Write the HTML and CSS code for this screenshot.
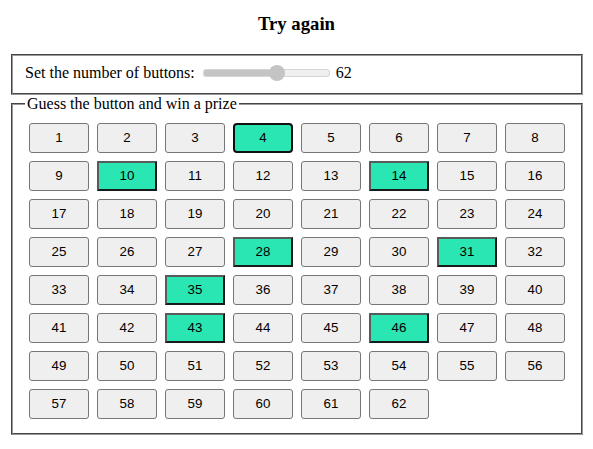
FILE: index.html
```html
<!DOCTYPE html>
<html>
<head>
<meta charset="utf-8">
<link rel="stylesheet" href="styles.css">
</head>
<body>
<h3 class="title">Try again</h3>
<fieldset class="settings">
  <label class="setting-label">Set the number of buttons: <input class="slider" type="range" min="5" max="100" value="62" style="--fill: 58.5%"> 62</label>
</fieldset>
<fieldset class="game">
  <legend class="game-legend">Guess the button and win a prize</legend>
  <div class="grid">
    <button class="num">1</button><button class="num">2</button><button class="num">3</button><button class="num focused">4</button><button class="num">5</button><button class="num">6</button><button class="num">7</button><button class="num">8</button>
    <button class="num">9</button><button class="num hit">10</button><button class="num">11</button><button class="num">12</button><button class="num">13</button><button class="num hit">14</button><button class="num">15</button><button class="num">16</button>
    <button class="num">17</button><button class="num">18</button><button class="num">19</button><button class="num">20</button><button class="num">21</button><button class="num">22</button><button class="num">23</button><button class="num">24</button>
    <button class="num">25</button><button class="num">26</button><button class="num">27</button><button class="num hit">28</button><button class="num">29</button><button class="num">30</button><button class="num hit">31</button><button class="num">32</button>
    <button class="num">33</button><button class="num">34</button><button class="num hit">35</button><button class="num">36</button><button class="num">37</button><button class="num">38</button><button class="num">39</button><button class="num">40</button>
    <button class="num">41</button><button class="num">42</button><button class="num hit">43</button><button class="num">44</button><button class="num">45</button><button class="num hit">46</button><button class="num">47</button><button class="num">48</button>
    <button class="num">49</button><button class="num">50</button><button class="num">51</button><button class="num">52</button><button class="num">53</button><button class="num">54</button><button class="num">55</button><button class="num">56</button>
    <button class="num">57</button><button class="num">58</button><button class="num">59</button><button class="num">60</button><button class="num">61</button><button class="num">62</button>
  </div>
</fieldset>
</body>
</html>
```

FILE: styles.css
```css
body {
  margin: 8px;
  font-family: "Liberation Serif", "Times New Roman", serif;
  font-size: 16px;
  color: #000;
  background: #fff;
}

.title {
  text-align: center;
  font-size: 18.72px;
  font-weight: bold;
  margin: 5px 0 19px;
}

fieldset {
  margin: 0 2px 0 3px;
  border: 2px groove #c0c0c0;
  border-color: #999;
  padding: 5.6px 12px 10px;
}

.settings {
  padding-top: 6px;
  padding-bottom: 9px;
}

.setting-label {
  display: block;
  line-height: 22px;
}

.slider {
  -webkit-appearance: none;
  appearance: none;
  width: 127px;
  height: 16px;
  margin: 2px 2px 2px 4px;
  padding: 0;
  vertical-align: -3px;
  background: transparent;
}

.slider::-webkit-slider-runnable-track {
  height: 8px;
  border-radius: 4px;
  background: linear-gradient(to right, #c4c4c4 var(--fill), #efefef var(--fill));
  box-shadow: inset 0 0 0 1px #d6d6d6;
}

.slider::-webkit-slider-thumb {
  -webkit-appearance: none;
  appearance: none;
  width: 16px;
  height: 16px;
  margin-top: -4px;
  border-radius: 50%;
  background: #c4c4c4;
  border: none;
}

.game {
  padding-bottom: 10px;
}

.game-legend {
  padding: 0 2px;
  font-size: 16px;
}

.grid {
  display: flex;
  flex-wrap: wrap;
}

.num {
  width: 60px;
  height: 30px;
  margin: 4px;
  padding: 0;
  font-family: "Liberation Sans", Arial, sans-serif;
  font-size: 13.33px;
  color: #000;
  background: #efefef;
  border: 1px solid #767676;
  border-radius: 3px;
}

.num.hit {
  background: #2ae6b2;
  border: 2px solid;
  border-color: #5a5a5a #1a1a1a #1a1a1a #5a5a5a;
  border-radius: 0;
}

.num.focused {
  background: #2ae6b2;
  border: 2px solid #101010;
  border-radius: 4px;
}
```
